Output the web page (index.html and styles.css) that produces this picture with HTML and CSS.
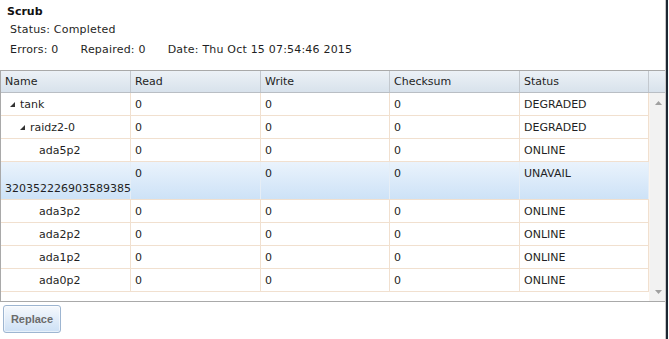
FILE: index.html
```
<!DOCTYPE html>
<html>
<head>
<meta charset="utf-8">
<link rel="stylesheet" href="styles.css">
</head>
<body>
<div class="frame">
  <div class="page">
    <div class="summary">
      <div class="title">Scrub</div>
      <div class="line status">Status: Completed</div>
      <div class="line stats"><span>Errors: 0</span><span>Repaired: 0</span><span>Date: Thu Oct 15 07:54:46 2015</span></div>
    </div>
    <div class="grid">
      <div class="head">
        <div class="hc c1">Name</div>
        <div class="hc c2">Read</div>
        <div class="hc c3">Write</div>
        <div class="hc c4">Checksum</div>
        <div class="hc c5">Status</div>
        <div class="hc sc"></div>
      </div>
      <div class="body">
        <div class="rows">
          <div class="row">
            <div class="cell c1"><span class="tw"><svg width="5" height="5" viewBox="0 0 5 5"><polygon points="5,0 5,5 0,5" fill="#333"/></svg></span>tank</div>
            <div class="cell c2">0</div><div class="cell c3">0</div><div class="cell c4">0</div><div class="cell c5">DEGRADED</div>
          </div>
          <div class="row">
            <div class="cell c1"><span class="ind1"></span><span class="tw"><svg width="5" height="5" viewBox="0 0 5 5"><polygon points="5,0 5,5 0,5" fill="#333"/></svg></span>raidz2-0</div>
            <div class="cell c2">0</div><div class="cell c3">0</div><div class="cell c4">0</div><div class="cell c5">DEGRADED</div>
          </div>
          <div class="row">
            <div class="cell c1"><span class="ind2"></span>ada5p2</div>
            <div class="cell c2">0</div><div class="cell c3">0</div><div class="cell c4">0</div><div class="cell c5">ONLINE</div>
          </div>
          <div class="row sel">
            <div class="cell c1"><span class="ind2"></span><span class="nm">320352226903589385</span></div>
            <div class="cell c2">0</div><div class="cell c3">0</div><div class="cell c4">0</div><div class="cell c5">UNAVAIL</div>
          </div>
          <div class="row">
            <div class="cell c1"><span class="ind2"></span>ada3p2</div>
            <div class="cell c2">0</div><div class="cell c3">0</div><div class="cell c4">0</div><div class="cell c5">ONLINE</div>
          </div>
          <div class="row">
            <div class="cell c1"><span class="ind2"></span>ada2p2</div>
            <div class="cell c2">0</div><div class="cell c3">0</div><div class="cell c4">0</div><div class="cell c5">ONLINE</div>
          </div>
          <div class="row">
            <div class="cell c1"><span class="ind2"></span>ada1p2</div>
            <div class="cell c2">0</div><div class="cell c3">0</div><div class="cell c4">0</div><div class="cell c5">ONLINE</div>
          </div>
          <div class="row">
            <div class="cell c1"><span class="ind2"></span>ada0p2</div>
            <div class="cell c2">0</div><div class="cell c3">0</div><div class="cell c4">0</div><div class="cell c5">ONLINE</div>
          </div>
        </div>
        <div class="scroll">
          <svg width="7" height="4" viewBox="0 0 7 4"><polygon points="3.5,0 7,4 0,4" fill="#a0a0a0"/></svg>
          <svg width="7" height="4" viewBox="0 0 7 4"><polygon points="0,0 7,0 3.5,4" fill="#a0a0a0"/></svg>
        </div>
      </div>
    </div>
    <div class="actions">
      <button class="btn">Replace</button>
    </div>
  </div>
</div>
</body>
</html>
```
FILE: styles.css
```
html, body {
  margin: 0;
  padding: 0;
  background: #fff;
}
body {
  font-family: "DejaVu Sans", Verdana, sans-serif;
  font-size: 11px;
  line-height: 15px;
  color: #1f1f24;
}
.frame {
  width: 666px;
  height: 339px;
  border-right: 2px solid #1d2733;
}
.page {
  width: 665px;
  height: 339px;
  border-right: 1px solid #c8c8c8;
}
.summary {
  padding: 4px 0 0 7px;
  height: 66px;
  box-sizing: border-box;
  letter-spacing: 0.2px;
}
.title {
  font-weight: bold;
  color: #111;
  letter-spacing: 0;
}
.line {
  padding-left: 3px;
}
.status {
  margin-top: 3px;
}
.stats {
  margin-top: 5px;
  display: flex;
  gap: 22px;
}
.grid {
  border: 1px solid #a9a9a9;
  border-right: none;
  margin-top: 4px;
}
.head {
  display: flex;
  height: 21px;
  background: linear-gradient(#ecf1f6, #d8e2ec);
  border-bottom: 1px solid #b9bec4;
}
.hc {
  box-sizing: border-box;
  padding: 3px 4px;
  border-right: 1px solid #c3c8ce;
  color: #1f1f24;
  white-space: nowrap;
}
.c1 { width: 130px; }
.c2 { width: 130px; }
.c3 { width: 129px; }
.c4 { width: 130px; }
.c5 { width: 129px; }
.hc.sc {
  width: 16px;
  border-right: none;
}
.body {
  display: flex;
  height: 208px;
}
.rows {
  width: 648px;
}
.row {
  display: flex;
  border-bottom: 1px solid #f1e0cf;
}
.cell {
  box-sizing: border-box;
  padding: 4px 4px 3px 4px;
  border-right: 1px solid #f1e0cf;
}
.row.sel {
  background: linear-gradient(#eaf3fc, #cde2f7);
}
.row.sel .cell {
  border-right-color: #e6eef6;
}
.tw {
  display: inline-block;
  width: 15px;
}
.tw svg {
  margin-left: 5px;
  vertical-align: 1px;
}
.ind1 {
  display: inline-block;
  width: 10px;
}
.ind2 {
  display: inline-block;
  width: 34px;
}
.nm {
  display: inline-block;
  white-space: nowrap;
}
.scroll {
  width: 16px;
  background: #f2f2f2;
  border-left: 1px solid #faf4ee;
  box-sizing: border-box;
  display: flex;
  flex-direction: column;
  justify-content: space-between;
  align-items: center;
  padding: 8px 0 7px 1px;
}
.scroll svg {
  display: block;
}
.actions {
  padding: 3px 0 0 3px;
}
.btn {
  width: 58px;
  height: 28px;
  border: 1px solid #9db5d1;
  border-radius: 3px;
  background: linear-gradient(#f6f9fd, #cde0f5);
  font-family: "Liberation Sans", Arial, sans-serif;
  font-weight: bold;
  font-size: 11px;
  color: #6b6b6b;
  padding: 0;
  box-shadow: inset 0 0 0 1px #ffffff88;
}
```
